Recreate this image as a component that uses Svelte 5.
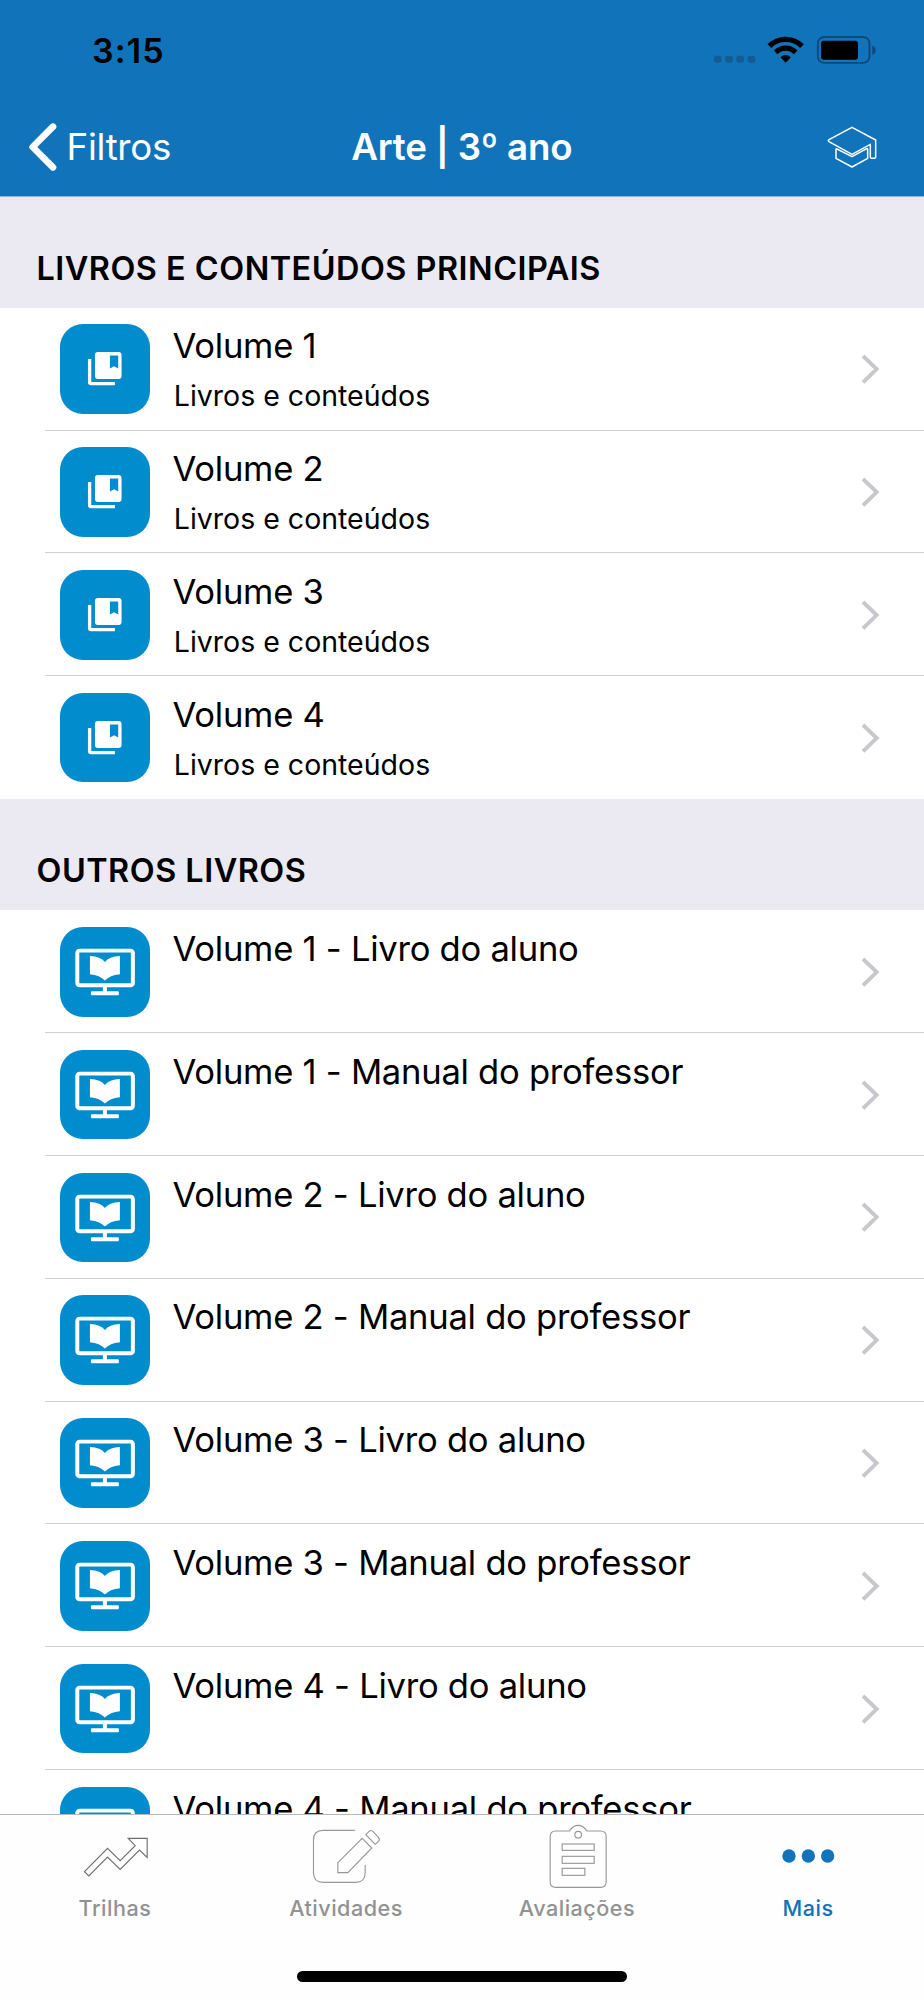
<script>
  const sections = [
    {
      title: 'LIVROS E CONTEÚDOS PRINCIPAIS',
      icon: 'collection',
      rows: [1, 2, 3, 4].map((n) => ({ title: `Volume ${n}`, subtitle: 'Livros e conteúdos' }))
    },
    {
      title: 'OUTROS LIVROS',
      icon: 'screen',
      rows: [1, 2, 3, 4].flatMap((n) => [
        { title: `Volume ${n} - Livro do aluno` },
        { title: `Volume ${n} - Manual do professor` }
      ])
    }
  ];
</script>

<div class="screen">
  <header>
    <div class="status">
      <span class="time">3:15</span>
      <svg class="indicators" width="166" height="30" viewBox="2136 106 498 90">
        <g fill="#125c93">
          <rect x="2142" y="168" width="23" height="21" rx="7" />
          <rect x="2175.500" y="168" width="23" height="21" rx="7" />
          <rect x="2209" y="168" width="23" height="21" rx="7" />
          <rect x="2243" y="168" width="23" height="21" rx="7" />
        </g>
        <g fill="none" stroke="#000">
          <path stroke-width="16" d="M2308.200 139.200A69 69 0 0 1 2405.800 139.200" />
          <path stroke-width="15.500" d="M2327 158A42.500 42.500 0 0 1 2387 158" />
        </g>
        <path d="M2341.500 172.500A22 22 0 0 1 2372.500 172.500L2357 189z" />
        <rect x="2453.500" y="112" width="155" height="77.500" rx="19" fill="none" stroke="#0d4a78" stroke-width="5.500" />
        <rect x="2463" y="123" width="111" height="57" rx="9" />
        <path d="M2617 138Q2627 142 2627 152T2617 166z" fill="#0d4a78" />
      </svg>
    </div>
    <nav>
      <div class="back">
        <svg width="32" height="50" viewBox="80 368 96 150">
          <path d="M158 382L97 443L158 504" fill="none" stroke="#fff" stroke-width="20" stroke-linecap="round" stroke-linejoin="round" />
        </svg>
        <span>Filtros</span>
      </div>
      <h1>Arte | 3º ano</h1>
      <svg class="cap" width="50" height="42" viewBox="1095 378 150 126">
        <g fill="none" stroke="#fff" stroke-width="4.500" stroke-linejoin="round">
          <path d="M1170 382L1241 420V471Q1241 475 1237 475H1229Q1225 475 1225 471V433L1170 463L1101 425Q1097 422 1101 419z" />
          <path d="M1125 447L1170 470L1214 446Q1217 445 1217 449V475L1170 501L1122 475V449Q1122 445 1125 447z" />
        </g>
      </svg>
    </nav>
  </header>

  <main>
    {#each sections as section}
      <section>
        <h2>{section.title}</h2>
        <ul>
          {#each section.rows as row}
            <li>
              <div class="tile">
                {#if section.icon === 'collection'}
                  <svg viewBox="180 403 269 269">
                    <path fill="#fff" d="M264 508H274V577H345V587H274Q264 587 264 577z" />
                    <path fill="#fff" fill-rule="evenodd" d="M294 487H356Q365 487 365 496V559Q365 568 356 568H294Q285 568 285 559V496Q285 487 294 487zM330 498V537L342.500 530L355 537V498z" />
                  </svg>
                {:else}
                  <svg viewBox="180 411 269 269">
                    <rect x="232" y="482" width="167" height="104" rx="7" fill="none" stroke="#fff" stroke-width="12" />
                    <path fill="#fff" d="M309 590H321V604H354Q357 604 357 607V613Q357 616 354 616H276Q273 616 273 613V607Q273 604 276 604H309z" />
                    <path fill="#fff" d="M270 498Q302 500 315 516Q328 500 360 498V553Q330 556 315 572Q300 556 270 553z" />
                  </svg>
                {/if}
              </div>
              <div class="text">
                <span class="title">{row.title}</span>
                {#if row.subtitle}<span class="subtitle">{row.subtitle}</span>{/if}
              </div>
              <svg class="chevron" width="20" height="32" viewBox="1380 168 60 96">
                <path d="M1386 177L1427 216L1386 256" fill="none" stroke="#c7c7cc" stroke-width="11.500" />
              </svg>
            </li>
          {/each}
        </ul>
      </section>
    {/each}
  </main>

  <footer>
    <div class="tabs">
      <div class="tab">
        <svg viewBox="241.5 180 210 210">
          <path stroke="#6e6e6e" d="M252 335L321 265L359 302L404 257L383 235H440V292L417 270L359 328L321 291L265 348z" />
        </svg>
        <span>Trilhas</span>
      </div>
      <div class="tab">
        <svg viewBox="934.5 180 210 210">
          <path d="M1063 211H968Q939 211 939 240V338Q939 367 968 367H1065Q1094 367 1094 338V315" />
          <path d="M1085 235L1114 264L1042 338H1012V308z" />
          <path d="M1096 224L1106 214Q1111 209 1117 214L1134 232Q1139 238 1134 244L1124 253z" />
        </svg>
        <span>Atividades</span>
      </div>
      <div class="tab">
        <svg viewBox="241.5 180 210 210">
          <path d="M321 213H280Q263 213 263 230V365Q263 382 280 382H414Q431 382 431 365V230Q431 213 414 213H373C366 202 358 196 347 196S328 202 321 213z" />
          <circle cx="347" cy="224" r="10" />
          <rect x="299" y="252" width="96" height="19" />
          <rect x="299" y="289" width="96" height="21" />
          <rect x="299" y="325" width="68" height="21" />
        </svg>
        <span>Avaliações</span>
      </div>
      <div class="tab active">
        <svg viewBox="934.5 180 210 210">
          <circle cx="979.500" cy="288" r="20" />
          <circle cx="1037.500" cy="288" r="20" />
          <circle cx="1095.500" cy="288" r="20" />
        </svg>
        <span>Mais</span>
      </div>
    </div>
    <div class="home"></div>
  </footer>
</div>

<style>
  :global(body) { margin: 0; background: #fff; }
  .screen {
    width: 924px;
    height: 2000px;
    display: flex;
    flex-direction: column;
    overflow: hidden;
    background: #fff;
    color: #000;
    font-family: Inter, "Liberation Sans", sans-serif;
    white-space: nowrap;
  }
  svg { display: block; flex: none; }

  header {
    flex: none;
    position: relative;
    height: 196px;
    margin-bottom: -0.6px;
    background: #1173b9;
    border-bottom: 1px solid #8fb7da;
  }
  .status {
    height: 99px;
    box-sizing: border-box;
    padding: 30px 46px 0 92px;
    display: flex;
    justify-content: space-between;
    align-items: flex-start;
  }
  .time { font-size: 34px; font-weight: 600; line-height: 42px; letter-spacing: 1.1px; }
  .indicators { margin-top: 5.300px; }
  nav {
    height: 97px;
    box-sizing: border-box;
    padding: 0 47px 2px 26.500px;
    display: grid;
    grid-template-columns: 1fr auto 1fr;
    align-items: center;
    color: #fff;
  }
  .back { display: flex; align-items: center; font-size: 36.7px; line-height: 44px; letter-spacing: -0.28px; }
  .back span { margin: 1px 0 0 8px; }
  h1 {
    margin: 1px 0 0 20px;
    font-size: 36.7px;
    font-weight: 600;
    line-height: 44px;
    letter-spacing: -0.19px;
  }
  .cap { justify-self: end; }

  main { flex: 1; min-height: 0; overflow: hidden; }
  h2 {
    margin: 0;
    height: 111.4px;
    box-sizing: border-box;
    padding: 52.500px 0 0 36.500px;
    background: #ebeaf3;
    font-size: 32.4px;
    font-weight: 600;
    line-height: 40px;
    letter-spacing: 0.5px;
  }
  ul { margin: 0; padding: 0; list-style: none; }
  li {
    height: 122.8px;
    box-sizing: border-box;
    padding: 0 43.500px 0 60px;
    display: flex;
    align-items: center;
    background: linear-gradient(#d0d0d3, #d0d0d3) 45px 100% / 879px 1px no-repeat;
  }
  li:last-child { background: none; }
  .tile {
    flex: none;
    width: 89.500px;
    height: 89.500px;
    border-radius: 23px;
    background: #008ccd;
  }
  .tile svg { width: 100%; height: 100%; }
  .text {
    flex: 1;
    align-self: stretch;
    padding: 16.600px 0 0 23px;
    display: flex;
    flex-direction: column;
  }
  .title { font-size: 34.6px; line-height: 42px; letter-spacing: -0.26px; }
  .subtitle { margin: 12.800px 0 0 1.300px; font-size: 28.5px; line-height: 34px; letter-spacing: 0; }

  footer {
    flex: none;
    height: 186px;
    box-sizing: border-box;
    border-top: 1px solid #b9b9b9;
    background: #fefefe;
    display: flex;
    flex-direction: column;
    align-items: center;
  }
  .tabs { width: 100%; height: 155.700px; display: grid; grid-template-columns: repeat(4, 1fr); }
  .tab {
    padding-top: 5px;
    display: flex;
    flex-direction: column;
    align-items: center;
    color: #929292;
    font-size: 21.6px;
    font-weight: 500;
    line-height: 26px;
    letter-spacing: 0.5px;
  }
  .tab svg { width: 70px; height: 70px; fill: none; stroke: #979797; stroke-width: 3.400px; }
  .tab span { margin: 5.300px 1px 0 0; }
  .tab.active { color: #1173b9; }
  .tab.active svg { fill: #1173b9; stroke: none; }
  .home { width: 330px; height: 11px; border-radius: 6px; background: #000; }
</style>
